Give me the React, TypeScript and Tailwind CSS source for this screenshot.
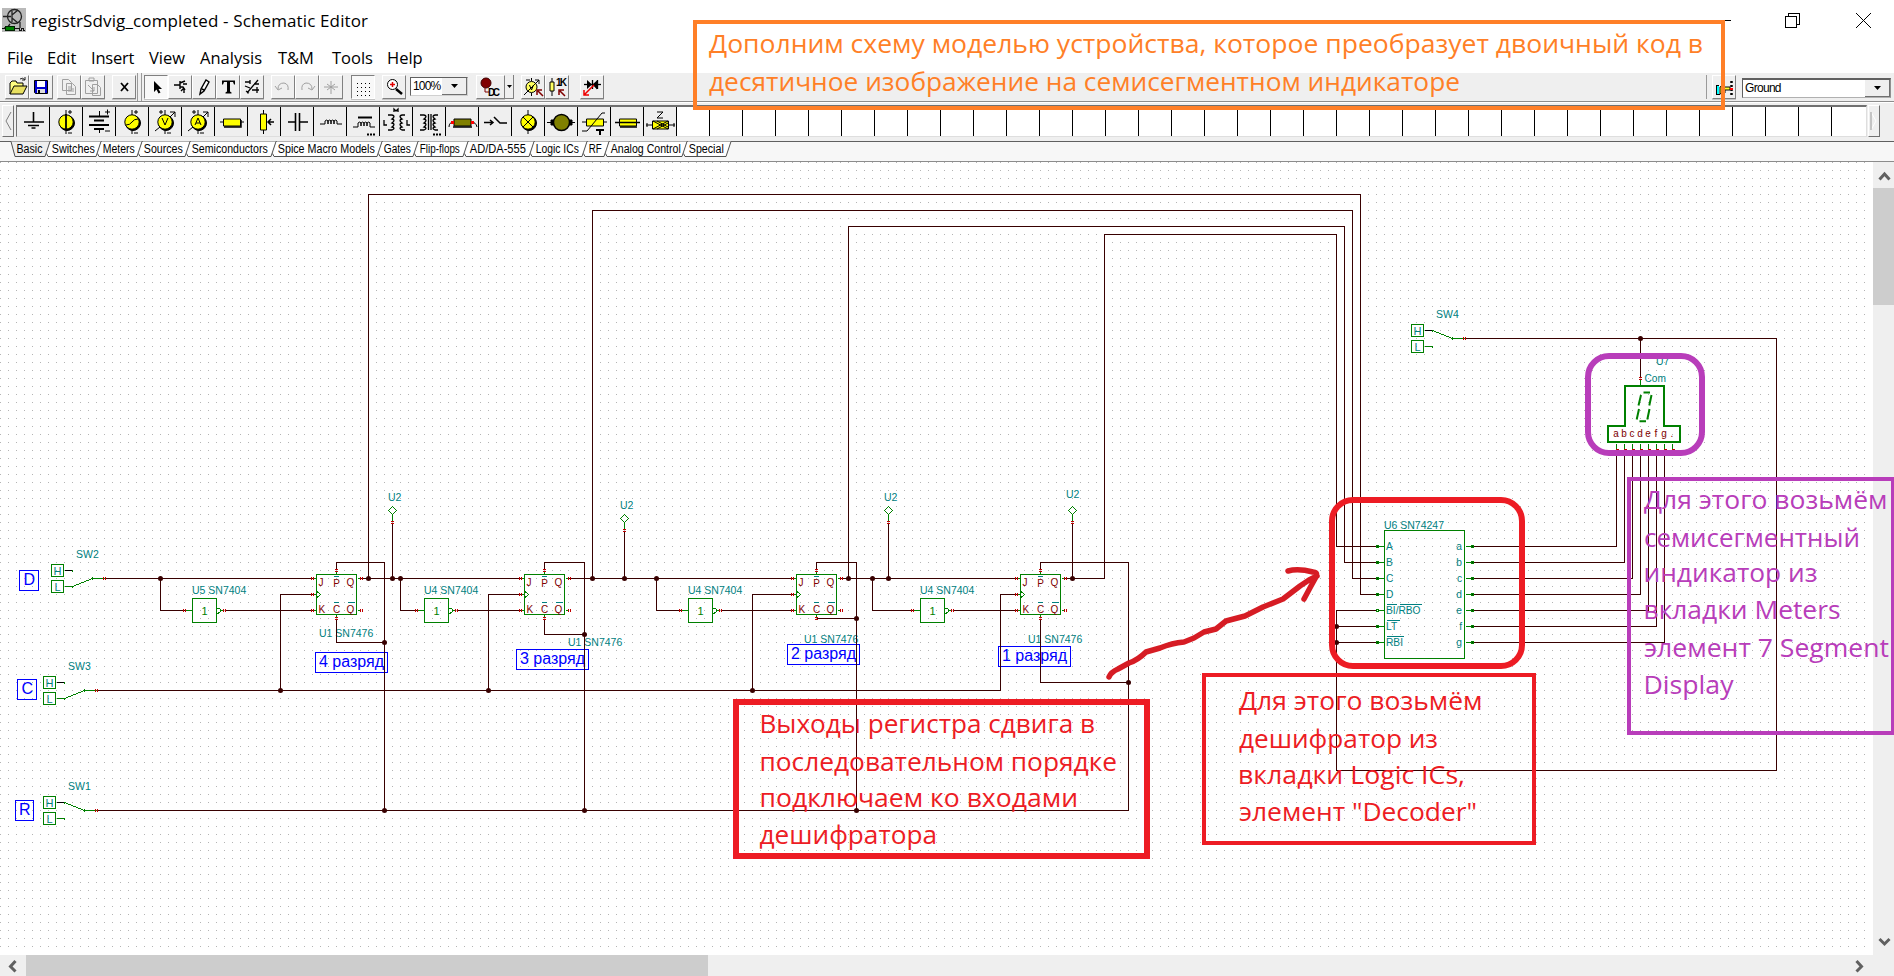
import React from "react";

type Kids = { children?: React.ReactNode };

const WIRE = "#380000";
const GREEN = "#008000";
const TEAL = "#008080";

/* ---------- window chrome ---------- */

function TitleBar() {
  return (
    <div className="flex h-[42px] items-center bg-white">
      <svg className="-mt-[2px] ml-[2px] h-6 w-6" viewBox="0 0 24 24" shapeRendering="crispEdges">
        <rect width="24" height="24" fill="#b9b9b9" />
        <g stroke="#222" fill="none" strokeWidth="1.3" shapeRendering="auto">
          <circle cx="12.5" cy="8.5" r="7" />
          <path d="M1 8.500h8M10 3v11M10 7l6-5M10 10l6 5M8 16l-3 4M2 20h4M18 14v6" />
        </g>
        <rect x="3" y="18" width="9" height="4" fill="#008000" stroke="#002000" />
        <path d="M0 20h3M12 20h5v2h2v-2h2v2h2" stroke="#111" fill="none" />
      </svg>
      <div className="ml-[5px] w-[360px] whitespace-nowrap text-[17px] leading-6 tracking-[0.13px] text-black">
        registrSdvig_completed - Schematic Editor
      </div>
      <div className="ml-auto flex h-full">
        <svg className="h-[42px] w-[72px]" viewBox="0 0 72 42"><path d="M26 20.500h10" stroke="#000" /></svg>
        <svg className="h-[42px] w-[72px]" viewBox="0 0 72 42" fill="none" stroke="#000" shapeRendering="crispEdges">
          <path d="M18.500 16.500h11v11h-11zM21.500 16.500v-3h11v11h-3" />
        </svg>
        <svg className="h-[42px] w-[55px]" viewBox="0 0 55 42" stroke="#000"><path d="M17 13l15 15M32 13l-15 15" /></svg>
      </div>
    </div>
  );
}

function MenuBar() {
  return (
    <div className="flex h-[29px] items-center bg-white pt-[2px] pl-[7px] text-[16.500px] leading-[27px] text-black">
      <div className="w-10">File</div>
      <div className="w-11">Edit</div>
      <div className="w-[58px] tracking-[-0.2px]">Insert</div>
      <div className="w-[51px]">View</div>
      <div className="w-[78px]">Analysis</div>
      <div className="w-[54px]">T&amp;M</div>
      <div className="w-[55px]">Tools</div>
      <div className="w-12">Help</div>
    </div>
  );
}

/* ---------- tool bar ---------- */

function Tool({ children, pressed, wide }: Kids & { pressed?: boolean; wide?: boolean }) {
  return (
    <div
      className={
        (pressed
          ? "border-t-[#808080] border-l-[#808080] border-r-white border-b-white bg-[#f8f8f8] "
          : "border-t-white border-l-white border-r-[#808080] border-b-[#808080] bg-[#efefef] ") +
        (wide ? "w-[29px] " : "w-6 ") +
        "h-6 shrink-0 border shadow-[0_1px_0_#c4c4c4]"
      }
    >
      <svg className={wide ? "h-[22px] w-[27px]" : "h-[22px] w-[22px]"} viewBox={wide ? "0 0 27 22" : "0 0 22 22"} fill="none">
        {children}
      </svg>
    </div>
  );
}

function ToolBar() {
  return (
    <div className="flex h-[31px] items-start border-b border-[#8c8c8c] border-t-2 border-t-white bg-[#efefef] pt-[2px] pl-[5px]">
      <Tool>
        <path d="M4 18V7l2-2h4l1 2h6v3" fill="#ffff80" stroke="#000" />
        <path d="M4 18l4-8h13l-4 8z" fill="#e8e060" stroke="#000" />
        <path d="M14 3q3-2 5 1M19 1v3h-3" stroke="#222" />
      </Tool>
      <Tool>
        <path d="M4.500 4.500h13v13h-12l-1-1z" fill="#0000d0" stroke="#000" />
        <path d="M7 5h8v6H7z" fill="#fff" /><path d="M7 13h8v4H7z" fill="#ddd" /><path d="M8 14h2v3H8z" fill="#000" />
      </Tool>
      <div className="w-[4px]" />
      <Tool>
        <path d="M4.500 3.500h6l3 3v8h-9zM8.500 7.500h6l3 3v8h-9zM10 11h4M10 13h6M10 15h6" stroke="#a0a0a0" fill="#efefef" />
      </Tool>
      <Tool>
        <path d="M3.500 4.500h12v13h-12zM7 4V2h5v3H7zM10.500 8.500h5l3 3v8h-8zM6 9l6 6M12 11v4H8" stroke="#a0a0a0" fill="#efefef" />
      </Tool>
      <div className="w-[7px]" />
      <Tool><path d="M8 7l7 8M15 7l-7 8" stroke="#000" strokeWidth="1.8" /></Tool>
      <div className="-mt-[2px] mr-[2px] ml-[1px] h-7 w-[5px] border-x border-[#9a9a9a]" />
      <Tool pressed><path d="M9 5v11l2.500-2.500 2 4 2-1-2-3.500h3.500z" fill="#000" /></Tool>
      <Tool><path d="M5 9h6M11 5v8M11 7l5-2M11 11h3l2 3M14 8h4M15 12v5M15 12l-3 3" stroke="#000" strokeWidth="1.4" /></Tool>
      <Tool><path d="M7 18l1-5 5-9 3 2-5 9zM9 13l2 1" stroke="#000" strokeWidth="1.400" fill="#fff" /></Tool>
      <Tool><path d="M5 4.500h13v4h-1l-1-2.500h-3v9.500l1.500 1v1H8.500v-1l1.500-1V6H7L6 8.500H5z" fill="#000" /></Tool>
      <Tool><path d="M4 6h5M9 4v4M17 4L6 17M4 10l5 2M13 8h5M11 14h7M16 11v6M5 15l3 2" stroke="#000" strokeWidth="1.300" /></Tool>
      <div className="w-[7px]" />
      <Tool><path d="M6 13q0-6 6-6 5 1 4 7M3 10l3 4 4-2" stroke="#a0a0a0" /></Tool>
      <Tool><path d="M16 13q0-6-6-6-5 1-4 7M19 10l-3 4-4-2" stroke="#a0a0a0" /></Tool>
      <Tool><path d="M4 11h14M11 5v13M7 8l4 3-4 3M15 8l-4 3 4 3" stroke="#a0a0a0" /></Tool>
      <div className="w-[8px]" />
      <Tool pressed>
        <path d="M5 7.500h14M5 11.500h14M5 15.500h14M5 19.500h14" stroke="#000" strokeDasharray="1 3" shapeRendering="crispEdges" />
      </Tool>
      <div className="w-[7px]" />
      <Tool>
        <circle cx="9.500" cy="8.500" r="5" stroke="#000" fill="#fff" />
        <path d="M9.500 6v5M7 8.500h5" stroke="#e00000" strokeWidth="1.500" />
        <path d="M13 13l6 5" stroke="#000" strokeWidth="2.500" />
      </Tool>
      <div className="mt-[2px] ml-[4px] flex h-[19px] w-[58px] border border-t-[#606060] border-r-[#d0d0d0] border-b-[#d0d0d0] border-l-[#606060] bg-white font-['Liberation_Sans']">
        <div className="w-[31px] pl-[2px] text-[12px] leading-4 tracking-[-0.8px]">100%</div>
        <div className="flex flex-1 items-center justify-center border-r border-b border-[#707070] bg-[#efefef]">
          <svg className="h-1 w-[7px]" viewBox="0 0 7 4"><path d="M0 0h7L3.500 4z" /></svg>
        </div>
      </div>
      <div className="w-[8px]" />
      <Tool wide>
        <circle cx="9" cy="7" r="5" fill="#800000" stroke="#400000" />
        <path d="M8 12v4h4" stroke="#800000" />
        <text x="11" y="20" fontSize="10" fontFamily="Liberation Sans" fontWeight="bold" fill="#000" textLength="12">DC</text>
      </Tool>
      <div className="flex h-6 w-[9px] items-center justify-center border-r border-b border-[#808080]">
        <svg className="h-[3px] w-[5px]" viewBox="0 0 5 3"><path d="M0 0h5L2.500 3z" /></svg>
      </div>
      <div className="w-[7px]" />
      <Tool>
        <circle cx="9.500" cy="11" r="5.500" fill="#ffff60" stroke="#000" />
        <path d="M2 19L17 4M13 4h4v4M4 4h4M9.500 2v3M9.500 17v3M7.500 9l2 5 2-5" stroke="#000" />
        <path d="M21 20l-5-5M15 19v-5h5" stroke="#800000" strokeWidth="1.500" />
      </Tool>
      <Tool>
        <path d="M4 6h4v9H4zM6 2v4M6 15v5" stroke="#000" fill="#ffff60" />
        <text x="10" y="10" fontSize="10" fontFamily="Liberation Sans" fontWeight="bold" fill="#000" textLength="11">1K</text>
        <path d="M19 20l-5-5M13 19v-5h5" stroke="#800000" strokeWidth="1.500" />
      </Tool>
      <div className="w-[11px]" />
      <Tool>
        <path d="M3 8.500h17" stroke="#000" strokeWidth="1.300" />
        <path d="M6 4v9l5-4.500zM11.500 8.500l4.500-4v9z" fill="#000" />
        <path d="M11.500 4v9M16.500 4v9" stroke="#000" strokeWidth="1.300" />
        <path d="M13 9L3 19M3 14v5h5" stroke="#f00000" strokeWidth="1.500" />
      </Tool>
      <div className="ml-auto flex w-[188px] items-start border-l border-[#9a9a9a] pl-[5px]">
        <Tool>
          <path d="M3.500 9v10M3 9.500h3M3 18.500h4" stroke="#000" />
          <path d="M4 10h2v8H4z" fill="#0ff" />
          <path d="M7 11l3-2v2h7v3h-5v3H9l-2 1z" fill="#ffff30" stroke="#000" />
          <path d="M18.500 5v15" stroke="#000" strokeWidth="2.500" strokeDasharray="2 2" />
          <path d="M17 12h3v2h-3z" fill="#f00" />
        </Tool>
        <div className="mt-[3px] ml-[6px] flex h-[20px] w-[149px] border border-t-2 border-[#606060] border-r-[#909090] border-b-[#b0b0b0] bg-white font-['Liberation_Sans']">
          <div className="w-[122px] pl-[2px] text-[12px] leading-4 tracking-[-0.7px]">Ground</div>
          <div className="flex flex-1 items-center justify-center border-r border-b border-[#707070] bg-[#efefef]">
            <svg className="h-1 w-[7px]" viewBox="0 0 7 4"><path d="M0 0h7L3.500 4z" /></svg>
          </div>
        </div>
      </div>
    </div>
  );
}

/* ---------- component palette ---------- */

const round = (inner: React.ReactNode, key: string) => (
  <g key={key}>
    <circle cx="17" cy="16" r="7.500" fill="#000" />
    <circle cx="16" cy="15" r="7.200" fill="#ffff00" stroke="#000" />
    {inner}
  </g>
);

const polarity = <path d="M16 3v5M16 22v5M18 5h4M20 3v4M18 26h4" />;
const meterArrow = <path d="M6 24l5-4M21 10l5-5M21 5h5v5M10 5h4M12 3v4M16 3v5M16 22v5M18 26h4" />;

const PARTS: React.ReactNode[] = [
  <path key="gnd" strokeWidth="1.600" d="M16.500 5v10M7 15h20M11 18.500h11M14.500 21h4" />,
  round(<>{polarity}<path d="M16 7v16" strokeWidth="1.800" /></>, "dc"),
  <g key="bat"><path d="M16.500 4v5M16.500 22v4M22 5h5M24.500 2.500v5M22 24h5" /><path strokeWidth="1.800" d="M6 9.500h20M11 13.500h10M6 18h20M11 22h10" /></g>,
  round(<>{polarity}<path d="M10 18q4 0 6-3t6-3" /></>, "sine"),
  round(<>{meterArrow}<path d="M13 11l3 7 3-7" /></>, "volt"),
  round(<>{meterArrow}<path d="M13 18l3-7 3 7M14 16h4" /></>, "amp"),
  <g key="res"><path d="M5 15h24" /><path d="M8.500 12h17v7h-17z" fill="#ff0" /><path d="M9 20h17v-7" strokeWidth="1.500" /></g>,
  <g key="pot"><path d="M15.500 3v24" /><path d="M12.500 7h6v16h-6z" fill="#ff0" /><path d="M20 15h6M23 12l-3 3 3 3" strokeWidth="1.500" /></g>,
  <path key="cap" strokeWidth="1.600" d="M7 15h7M19 15h8M14.500 6v18M18.500 6v18" />,
  <path key="ind" d="M6 17h5v-3q2-2 3 0v3-3q2-2 3 0v3-3q2-2 3 0v3-3q2-2 3 0v3h5" />,
  <g key="core"><path d="M11 10.500h14" strokeWidth="2" /><path d="M6 20h5v-4q2-2 3 0v3-3q2-2 3 0v3-3q2-2 3 0v3-3q2-2 3 0v4h5" /><path d="M20 27.500h8" strokeWidth="2" strokeDasharray="2 1" /></g>,
  <g key="mutual" strokeWidth="1.300"><path d="M8 8h4q4 1 0 4 4 1 0 4 4 1 0 4 4 1 0 3H8M25 8h-3q-4 1 0 4-4 1 0 4-4 1 0 4-4 1 0 3h3M14 5V2l2 2 2-2v3M4 13v5h3M27 13v5h3" /></g>,
  <g key="trafo" strokeWidth="1.300"><path d="M7 8h4q4 1 0 4 4 1 0 4 4 1 0 4 4 1 0 3H7M25 8h-3q-4 1 0 4-4 1 0 4-4 1 0 4-4 1 0 3h3M15.500 7v16M18 7v16" /><path d="M20 27.500h8" strokeWidth="2" strokeDasharray="2 1" /></g>,
  <g key="line"><path d="M3 20q0-5 5-5M25 15q5 0 6 5" /><path d="M8 12h17v7H8z" fill="#808000" /><path d="M7 20h19" strokeWidth="1.500" /><path d="M5 15.500h3M25 15.500h3" stroke="#f00" strokeWidth="3" /></g>,
  <path key="sw" d="M5 15.500h9M11 13l3 2.500-3 2.500M15 10l6 6h7" strokeWidth="1.500" />,
  round(<path d="M16 3v5M16 22v5M11 10l10 10M21 10L11 20" />, "lamp"),
  <g key="motor"><path d="M2 15.500h28" /><path d="M6 13h4v5H6zM23 13h4v5h-4z" fill="#000" /><circle cx="16.500" cy="15.500" r="8" fill="#808000" strokeWidth="1.500" /></g>,
  <g key="therm"><path d="M4 15h25" /><path d="M8.500 12h17v7h-17z" fill="#ff0" /><path d="M4 24h5L24 6h3" /><path d="M18 23h8M22 23v5" strokeWidth="2" /></g>,
  <g key="fuse"><path d="M8.500 12h17v7h-17z" fill="#ff0" /><path d="M4 15.500h25M9 20h17" strokeWidth="1.300" /></g>,
  <g key="imp"><path d="M2 18h29M3 16v4M30 16v4" /><path d="M8.500 14h16v8h-16z" fill="#ff0" /><path d="M9 14l15 8M24 14L9 22M13 14l11 6M24 16l-11 6M13 5h6l-6 6h6" /></g>,
];

function Palette() {
  return (
    <div className="flex h-[40px] border-b border-[#606060] border-t border-t-white bg-[#efefef] pt-[2px] pl-[2px]">
      <div className="flex h-[32px] w-[12px] items-center justify-center border border-white border-r-[#707070] border-b-[#707070]">
        <svg className="h-6 w-2" viewBox="0 0 8 24" fill="none"><path d="M7 3L2 12l5 9" stroke="#808080" /></svg>
      </div>
      <div className="ml-[2px] flex h-[32px] w-[1851px] border border-t-2 border-[#707070] border-r-[#dedede] border-b-[#dedede] bg-white">
        {Array.from({ length: 56 }, (_, i) => (
          <div
            key={i}
            className={
              (i < PARTS.length ? "bg-[#efefef] " : "bg-white ") +
              (i < 55 ? "border-r border-black " : "") +
              "h-[29px] w-[33px] shrink-0"
            }
          >
            {i < PARTS.length && (
              <svg className="h-[30px] w-8" viewBox="0 0 32 30" fill="none" stroke="#000">{PARTS[i]}</svg>
            )}
          </div>
        ))}
      </div>
      <div className="ml-[1px] flex h-[32px] w-[12px] items-center justify-center border border-white border-r-[#707070] border-b-[#707070]">
        <svg className="h-6 w-2" viewBox="0 0 8 24" fill="none"><path d="M1 21V3l5 9-5 9" stroke="#fff" /><path d="M1 3v18" stroke="#909090" /></svg>
      </div>
    </div>
  );
}

const TABS: { label: string; w: number; t: number }[] = [
  { label: "Basic", w: 34, t: 26 },
  { label: "Switches", w: 51, t: 43 },
  { label: "Meters", w: 41, t: 32 },
  { label: "Sources", w: 48, t: 39 },
  { label: "Semiconductors", w: 86, t: 76 },
  { label: "Spice Macro Models", w: 106, t: 97 },
  { label: "Gates", w: 36, t: 27 },
  { label: "Flip-flops", w: 50, t: 40 },
  { label: "AD/DA-555", w: 66, t: 56 },
  { label: "Logic ICs", w: 53, t: 43 },
  { label: "RF", w: 22, t: 13 },
  { label: "Analog Control", w: 78, t: 70 },
  { label: "Special", w: 44, t: 35 },
];

function Tabs() {
  return (
    <div className="flex h-5 border-b border-[#8c8c8c] bg-[#f7f7f7] pl-[14px]">
      {TABS.map(({ label, w, t }, i) => (
        <svg key={label} className="h-4 shrink-0 overflow-visible" style={{ width: w }} viewBox={`0 0 ${w} 16`}>
          <path
            d={`M${i === 0 ? "-3 -0.5L1" : "2.800 -0.5L-1"} 14.500H${w - 3}L${w + 2} -0.500Z`}
            fill={i === 0 ? "#efefef" : "#fff"}
          />
          <path
            d={`${i === 0 ? "M-3 -0.5L1 14.500" : "M-1.500 11.500L0 14.500"}H${w - 3}L${w + 2} -0.500`}
            fill="none"
            stroke="#505050"
          />
          <text
            x={i === 0 ? 2.5 : 3.8}
            y="11"
            fontFamily="Liberation Sans, sans-serif"
            fontSize="12"
            fill="#000"
            textLength={t}
            lengthAdjust="spacingAndGlyphs"
          >
            {label}
          </text>
        </svg>
      ))}
    </div>
  );
}

/* ---------- schematic ---------- */

function Label({ x, y, size = 10.5, fill = TEAL, anchor, len, children }: Kids & {
  x: number; y: number; size?: number; fill?: string; anchor?: "middle" | "end"; len?: number;
}) {
  return (
    <text x={x} y={y} fontSize={size} fill={fill} stroke="none" textAnchor={anchor} textLength={len} lengthAdjust="spacingAndGlyphs">
      {children}
    </text>
  );
}

/* red end-of-pin marker, horizontal or vertical (v) */
function Mark({ x, y, v }: { x: number; y: number; v?: boolean }) {
  return (
    <path
      stroke="#c00000"
      d={v ? `M${x - 1.5} ${y - 1}h3M${x - 1.5} ${y + 1}h3` : `M${x - 1} ${y - 1.5}v3M${x + 1} ${y - 1.5}v3`}
    />
  );
}

function Node({ x, y }: { x: number; y: number }) {
  return <circle cx={x} cy={y} r="2.500" fill={WIRE} stroke="none" shapeRendering="auto" />;
}

function LogicSwitch({ x, y, name, high }: { x: number; y: number; name: string; high?: boolean }) {
  return (
    <g stroke={GREEN}>
      <path d={`M${x} ${y - 14}h12v12h-12zM${x} ${y + 2}h12v12h-12z`} />
      <path d={`M${x + 13} ${y - 8}h8`} stroke="#000" />
      <path d={`M${x + 13} ${y + 8}h8M${x + 21} ${y - 9}v2M${x + 21} ${y + 7}v2`} />
      <path d={`M${x + 21} ${high ? y - 8 : y + 8}L${x + 41} ${y}`} />
      <path d={`M${x + 41} ${y}h12M${x + 41} ${y - 1.5}v3`} />
      <Mark x={x + 53} y={y} />
      <Label x={x + 6} y={y - 4} size={11} anchor="middle">H</Label>
      <Label x={x + 6} y={y + 12} size={11} anchor="middle">L</Label>
      <Label x={x + 24.5} y={y - 21}>{name}</Label>
    </g>
  );
}

function Inverter({ x, name }: { x: number; name: string }) {
  return (
    <g stroke={GREEN}>
      <path d={`M${x} 598h24v24h-24zM${x} 610h-7M${x + 24} 607.500h2l2 1.500v2l-2 1.500h-2M${x + 28} 610h3`} />
      <Mark x={x - 8} y={610} />
      <Mark x={x + 32} y={610} />
      <Label x={x + 12} y={614} size={11} fill={GREEN} anchor="middle">1</Label>
      <Label x={x - 0.5} y={593}>{name}</Label>
    </g>
  );
}

function FlipFlop({ x }: { x: number }) {
  const red = "#800000";
  return (
    <g stroke={GREEN}>
      <path d={`M${x} 574h40v40h-40zM${x - 3} 578h3M${x - 3} 594h3M${x - 3} 610h3M${x + 41} 578h3M${x + 41} 610h3M${x + 20} 571v3M${x + 20} 614v3`} />
      <path d={`M${x} 590.500L${x + 4} 594L${x} 597.500`} />
      <Mark x={x - 4} y={578} />
      <Mark x={x - 4} y={594} />
      <Mark x={x - 4} y={610} />
      <Mark x={x + 44.5} y={578} />
      <Mark x={x + 44.5} y={610} />
      <Mark x={x + 20} y={570} v />
      <Mark x={x + 20} y={618} v />
      <path d={`M${x + 17.5} 576h5M${x + 17.5} 602h5M${x + 31} 602h7`} stroke={TEAL} />
      <Label x={x + 2} y={585} size={10} fill={red}>J</Label>
      <Label x={x + 20} y={586} size={10} fill={red} anchor="middle">P</Label>
      <Label x={x + 34} y={585} size={10} fill={red} anchor="middle">Q</Label>
      <Label x={x + 2} y={612.500} size={10} fill={red}>K</Label>
      <Label x={x + 20} y={612} size={10} fill={red} anchor="middle">C</Label>
      <Label x={x + 34} y={612} size={10} fill={red} anchor="middle">Q</Label>
    </g>
  );
}

function Probe({ x, y, lx, ly }: { x: number; y: number; lx: number; ly: number }) {
  return (
    <g stroke={GREEN}>
      <path d={`M${x} ${y - 4}l4 4l-4 4l-4 -4zM${x} ${y + 4}v7`} />
      <Mark x={x} y={y + 12} v />
      <Label x={lx} y={ly}>U2</Label>
    </g>
  );
}

function Tag({ x, y, w, children, tx }: Kids & { x: number; y: number; w: number; tx: number }) {
  return (
    <g>
      <rect x={x} y={y} width={w} height="20" stroke="#0000ff" fill="none" />
      <Label x={tx} y={y + 14.5} size={16} fill="#0000ff" len={w > 30 ? 65 : undefined}>{children}</Label>
    </g>
  );
}

const WIRES = [
  "M105 578H312M160 578V610H184M224 610H312M280 690V594H312",
  "M360 578H520M368 578V194H1360V594H1376M392 578V523M400 578V610H416M456 610H520M488 690V594H520",
  "M568 578H792M592 578V210H1352V578H1376M624 578V531M656 578V610H680M720 610H792M752 690V594H792",
  "M840 578H1016M848 578V226H1344V562H1376M888 578V523M872 578V610H912M952 610H1016M97 690H1000V594H1016",
  "M1064 578H1104V234H1336V546H1376M1072 578V523",
  "M336 569V562H384V810M336 619V642H384",
  "M544 569V562H584V810M544 619V634H584",
  "M816 569V562H856V810M816 618H856",
  "M1040 569V562H1128V810H97M1040 619V682H1128",
  "M1376 610H1336V770H1776V338H1465M1336 626H1376M1336 642H1376M1640 338V377",
  "M1473 546H1616V450M1473 562H1624V450M1473 578H1632V450M1473 594H1640V450M1473 610H1648V450M1473 626H1656V450M1473 642H1664V450",
];

const NODES: [number, number][] = [
  [160, 578], [368, 578], [392, 578], [400, 578], [592, 578], [624, 578], [656, 578],
  [848, 578], [872, 578], [888, 578], [1072, 578], [280, 690], [488, 690], [752, 690],
  [384, 642], [584, 634], [856, 618], [1128, 682], [384, 810], [584, 810], [856, 810],
  [1336, 626], [1336, 642], [1640, 338],
];

const INPUTS = ["A", "B", "C", "D", "BI/RBO", "LT", "RBI"];
const OUTPUTS = ["a", "b", "c", "d", "e", "f", "g"];

function Decoder() {
  return (
    <g stroke={GREEN}>
      <rect x="1384" y="530" width="80" height="128" />
      {INPUTS.map((t, i) => (
        <g key={t}>
          <path d={`M1378 ${546 + i * 16}h6`} />
          <rect x="1375.500" y={545 + i * 16} width="2" height="2" fill={i === 4 ? "#fff" : "#003800"} />
          <Label x={1385.5} y={549.5 + i * 16} size={10.2}>{t}</Label>
        </g>
      ))}
      {OUTPUTS.map((t, i) => (
        <g key={t}>
          <path d={`M1465 ${546 + i * 16}h6`} />
          <rect x="1471" y={545 + i * 16} width="2" height="2" fill="#003800" />
          <Label x={1461.5} y={549.5 + i * 16} size={10.2} anchor="end">{t}</Label>
        </g>
      ))}
      <path d="M1386 604h10M1399 604h22M1386 620h13M1386 636h17" stroke={TEAL} />
      <Label x={1383.500} y={528.500} len={60}>U6 SN74247</Label>
    </g>
  );
}

function SevenSegment() {
  return (
    <g stroke={GREEN}>
      <path d="M1640 379v7M1616 443v6M1624 443v6M1632 443v6M1640 443v6M1648 443v6M1656 443v6M1664 443v6M1672 443v6" />
      <path d="M1615 449h3M1623 449h3M1631 449h3M1639 449h3M1647 449h3M1655 449h3M1663 449h3M1671 449h3" stroke="#c00000" />
      <g transform="translate(-.5 -.5)" strokeWidth="2">
        <path d="M1608 426H1625V386H1664V426H1680V442H1608Z" />
        <path
          d="M1643.500 392.500h6.500M1641 395l-2.500 10.500M1651.500 395l-2.200 10.500M1639 409l-2.300 10.500M1649.500 409l-2.200 10.500M1639.500 421.300h6.500"
          shapeRendering="auto"
        />
      </g>
      <Mark x={1640} y={378} v />
      {["a", "b", "c", "d", "e", "f", "g", "."].map((t, i) => (
        <text key={t} x={1615.500 + i * 8} y="436.500" fontSize="10" fontFamily="Liberation Sans" textAnchor="middle" stroke="none" fill="#800000">{t}</text>
      ))}
      <Label x={1644} y={381} len={21.5}>Com</Label>
      <Label x={1655.500} y={364.500}>U7</Label>
    </g>
  );
}

function Schematic() {
  return (
    <svg className="h-[793px] w-[1873px] shrink-0 bg-white" viewBox="0 162 1873 793">
      <defs>
        <pattern id="grid" width="8" height="8" patternUnits="userSpaceOnUse">
          <rect x="0" y="2" width="1" height="1" fill="#b4b4b4" />
        </pattern>
      </defs>
      <rect x="0" y="162" width="1866" height="788" fill="url(#grid)" />
      <g transform="translate(.5 .5)" fill="none" fontFamily="Liberation Sans, Arial, sans-serif" shapeRendering="crispEdges">
        <Tag x={19} y={570} w={19} tx={23}>D</Tag>
        <Tag x={17} y={679} w={19} tx={21}>C</Tag>
        <Tag x={15} y={800} w={18} tx={18.5}>R</Tag>
        <Tag x={315} y={652} w={72} tx={318.5}>4 разряд</Tag>
        <Tag x={516} y={649} w={72} tx={519.5}>3 разряд</Tag>
        <Tag x={787} y={644} w={72} tx={790.5}>2 разряд</Tag>
        <Tag x={998} y={646} w={72} tx={1001.5}>1 разряд</Tag>
        <Label x={318.5} y={636}>U1 SN7476</Label>
        <Label x={567.5} y={645}>U1 SN7476</Label>
        <Label x={803.5} y={642}>U1 SN7476</Label>
        <Label x={1027.5} y={642}>U1 SN7476</Label>

        <path d={WIRES.join("")} stroke={WIRE} />
        {NODES.map(([x, y]) => <Node key={`${x}-${y}`} x={x} y={y} />)}

        <LogicSwitch x={51} y={578} name="SW2" />
        <LogicSwitch x={43} y={690} name="SW3" />
        <LogicSwitch x={43} y={810} name="SW1" high />
        <LogicSwitch x={1411} y={338} name="SW4" high />
        <Inverter x={192} name="U5 SN7404" />
        <Inverter x={424} name="U4 SN7404" />
        <Inverter x={688} name="U4 SN7404" />
        <Inverter x={920} name="U4 SN7404" />
        <FlipFlop x={316} />
        <FlipFlop x={524} />
        <FlipFlop x={796} />
        <FlipFlop x={1020} />
        <Probe x={392} y={510} lx={387.5} ly={500.5} />
        <Probe x={624} y={518} lx={619.5} ly={508.5} />
        <Probe x={888} y={510} lx={883.5} ly={500.5} />
        <Probe x={1072} y={510} lx={1065.5} ly={497.5} />
        <Decoder />
        <SevenSegment />
      </g>
    </svg>
  );
}

/* ---------- notes drawn above the window ---------- */

type Line = [text: string, x: number, baseline: number, width: number];

const ORANGE: Line[] = [
  ["Дополним схему моделью устройства, которое преобразует двоичный код в", 709, 52.5, 994],
  ["десятичное изображение на семисегментном индикаторе", 709, 90.5, 751],
];
const RED: Line[] = [
  ["Выходы регистра сдвига в", 759.5, 732.5, 335.5],
  ["последовательном порядке", 759.5, 771, 357.5],
  ["подключаем ко входами", 759.5, 807, 318.5],
  ["дешифратора", 759.5, 843.5, 177.5],
  ["Для этого возьмём", 1239, 709.5, 243.5],
  ["дешифратор из", 1239, 748, 199],
  ["вкладки Logic ICs,", 1238, 783.5, 227],
  ['элемент "Decoder"', 1239, 820.5, 238],
];
const PURPLE: Line[] = [
  ["Для этого возьмём", 1644, 509, 243.5],
  ["семисегментный", 1644, 547, 216],
  ["индикатор из", 1643.5, 582, 174],
  ["вкладки Meters", 1643.5, 619, 197],
  ["элемент 7 Segment", 1644, 657, 245],
  ["Display", 1643.5, 694, 90],
];

function Note({ lines, fill }: { lines: Line[]; fill: string }) {
  return (
    <g fill={fill} stroke="none">
      {lines.map(([text, x, y, w]) => (
        <text key={text + y} x={x} y={y} textLength={w} lengthAdjust="spacingAndGlyphs">{text}</text>
      ))}
    </g>
  );
}

function Notes() {
  return (
    <svg
      className="pointer-events-none absolute inset-0 h-[976px] w-[1894px]"
      viewBox="0 0 1894 976"
      fill="none"
      fontFamily="Open Sans, Noto Sans, sans-serif"
      fontSize="25.600"
    >
      <rect x="695" y="22" width="1028" height="86" stroke="#ff7f27" strokeWidth="4" />
      <g stroke="#ed1c24">
        <rect x="736" y="702" width="411" height="154" strokeWidth="6" />
        <rect x="1204" y="675" width="330" height="168" strokeWidth="4" />
        <rect x="1332" y="500" width="190" height="166" rx="21" strokeWidth="6" />
      </g>
      <path
        d="M1109 677Q1111 672 1118 669L1129 663Q1138 660 1146 652L1160 648Q1172 643 1184 642L1194 638L1204 632L1216 629L1226 621L1245 616L1263 607L1283 599L1300 586L1309 580L1317 576M1288 571Q1298 568 1313 572Q1318 572 1316 577L1311 586L1304 599"
        stroke="#d61c24"
        strokeWidth="5.500"
        strokeLinecap="round"
        strokeLinejoin="round"
      />
      <g stroke="#b83dba">
        <rect x="1588" y="356" width="114" height="97" rx="21" strokeWidth="6" />
        <rect x="1629" y="479" width="264" height="254" strokeWidth="4" />
      </g>
      <Note lines={ORANGE} fill="#ff7f27" />
      <Note lines={RED} fill="#ed1c24" />
      <Note lines={PURPLE} fill="#b83dba" />
    </svg>
  );
}

/* ---------- scroll bars ---------- */

function Chevron({ d }: { d: string }) {
  return (
    <svg className="h-[21px] w-[21px] shrink-0" viewBox="0 0 21 21" fill="none">
      <path d={d} stroke="#606060" strokeWidth="3" />
    </svg>
  );
}

export default function App() {
  return (
    <div className="relative flex h-[976px] w-[1894px] flex-col overflow-hidden bg-white font-['Open_Sans','Noto_Sans',sans-serif]">
      <TitleBar />
      <MenuBar />
      <ToolBar />
      <Palette />
      <Tabs />
      <div className="flex h-[793px] shrink-0">
        <Schematic />
        <div className="flex w-[21px] flex-col items-end bg-[#efefef]">
          <div className="flex h-[26px] items-center pt-[3px]"><Chevron d="M6.500 13.500l5-5.500 5 5.500" /></div>
          <div className="h-[117px] w-full bg-[#cdcdcd]" />
          <div className="mt-auto flex h-[28px] items-center"><Chevron d="M6.500 8l5 5 5-5" /></div>
        </div>
      </div>
      <div className="flex h-[21px] shrink-0 items-center bg-[#efefef]">
        <div className="w-[26px] pl-[3px]"><Chevron d="M12.500 6l-5 5.500 5 5" /></div>
        <div className="h-full w-[682px] bg-[#cdcdcd]" />
        <div className="ml-auto pr-[24px]"><Chevron d="M7.500 6l5 5.500-5 5" /></div>
      </div>
      <Notes />
    </div>
  );
}
